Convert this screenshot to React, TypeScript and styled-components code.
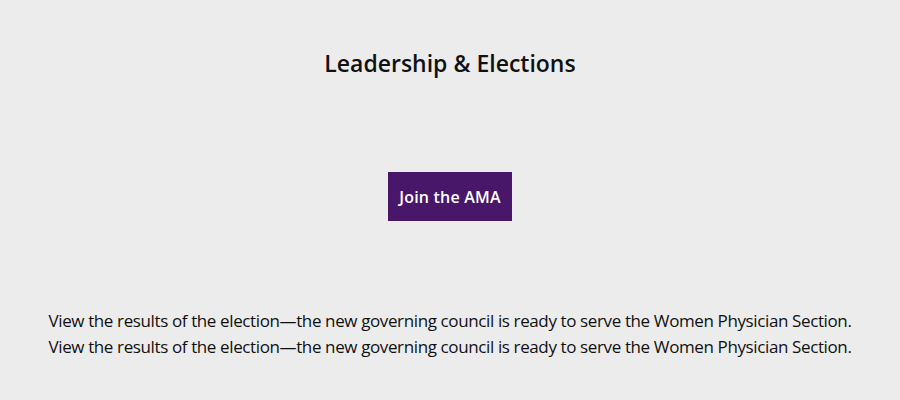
import React from 'react'
import styled, { createGlobalStyle } from 'styled-components'

const GlobalStyle = createGlobalStyle`
  html, body {
    margin: 0;
    padding: 0;
    background: #ececec;
  }
  body {
    font-family: 'Open Sans', 'Liberation Sans', sans-serif;
    color: #111;
  }
`

const Page = styled.main`
  width: 900px;
  height: 400px;
  display: flex;
  flex-direction: column;
  align-items: center;
  box-sizing: border-box;
  padding-top: 47px;
`

const Title = styled.h2`
  margin: 0;
  font-size: 23px;
  line-height: 32px;
  font-weight: 600;
  letter-spacing: 0;
  color: #111;
`

const JoinButton = styled.a`
  margin-top: 93px;
  display: flex;
  align-items: center;
  justify-content: center;
  width: 124px;
  height: 49px;
  background: #49176a;
  color: #fff;
  font-size: 16px;
  font-weight: 600;
  letter-spacing: 0.2px;
  text-decoration: none;
`

const Intro = styled.div`
  margin-top: 87px;
  text-align: center;
`

const IntroLine = styled.p`
  margin: 0;
  font-size: 17px;
  line-height: 26px;
  letter-spacing: -0.38px;
  white-space: nowrap;
  color: #111;
`

const line =
  'View the results of the election\u2014the new governing council is ready to serve the Women Physician Section.'

export default function App() {
  return (
    <>
      <GlobalStyle />
      <Page>
        <Title>Leadership &amp; Elections</Title>
        <JoinButton href="#">Join the AMA</JoinButton>
        <Intro>
          <IntroLine>{line}</IntroLine>
          <IntroLine>{line}</IntroLine>
        </Intro>
      </Page>
    </>
  )
}
